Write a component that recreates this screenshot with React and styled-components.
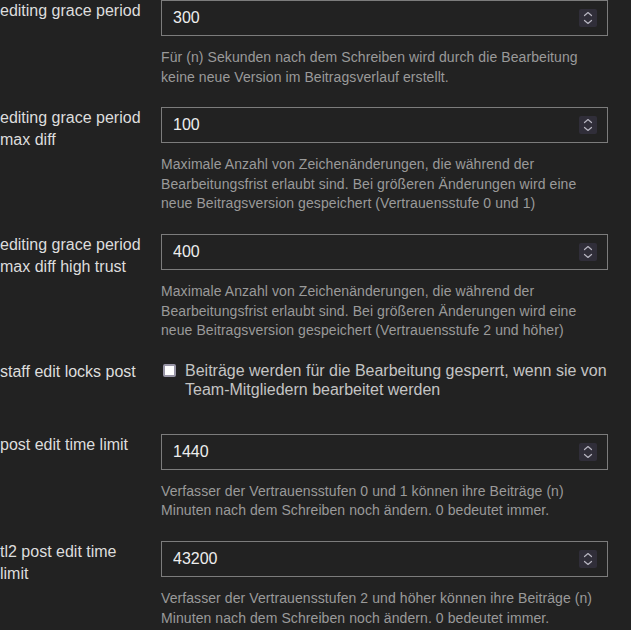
import React from "react"
import styled, { createGlobalStyle } from "styled-components"

const settings = [
    {
        label: "editing grace period",
        value: "300",
        description: "Für (n) Sekunden nach dem Schreiben wird durch die Bearbeitung keine neue Version im Beitragsverlauf erstellt."
    },
    {
        label: "editing grace period max diff",
        value: "100",
        description: "Maximale Anzahl von Zeichenänderungen, die während der Bearbeitungsfrist erlaubt sind. Bei größeren Änderungen wird eine neue Beitragsversion gespeichert (Vertrauensstufe 0 und 1)"
    },
    {
        label: "editing grace period max diff high trust",
        value: "400",
        description: "Maximale Anzahl von Zeichenänderungen, die während der Bearbeitungsfrist erlaubt sind. Bei größeren Änderungen wird eine neue Beitragsversion gespeichert (Vertrauensstufe 2 und höher)"
    },
    {
        label: "staff edit locks post",
        checkbox: "Beiträge werden für die Bearbeitung gesperrt, wenn sie von Team-Mitgliedern bearbeitet werden"
    },
    {
        label: "post edit time limit",
        value: "1440",
        description: "Verfasser der Vertrauensstufen 0 und 1 können ihre Beiträge (n) Minuten nach dem Schreiben noch ändern. 0 bedeutet immer."
    },
    {
        label: "tl2 post edit time limit",
        value: "43200",
        description: "Verfasser der Vertrauensstufen 2 und höher können ihre Beiträge (n) Minuten nach dem Schreiben noch ändern. 0 bedeutet immer."
    }
]

const GlobalStyle = createGlobalStyle`
body{
    margin:0;
    background:#222222;
    font-family:"Liberation Sans", Arial, sans-serif;
}
`

const Page = styled.div`
display:flex;
flex-direction:column;
`

const SettingRow = styled.div`
display:grid;
grid-template-columns:145px 447px;
column-gap:16px;
align-items:start;
margin-bottom:${props => props.$checkbox ? "35px" : "20px"};
`

const Label = styled.div`
font-size:16px;
line-height:22px;
color:#dddddd;
`

const Control = styled.div`
display:flex;
flex-direction:column;
`

const Field = styled.div`
position:relative;
`

const NumberInput = styled.input`
box-sizing:border-box;
width:100%;
height:36px;
margin:0;
padding:0 11px;
background:#222222;
border:1px solid #7c7c7c;
border-radius:0;
color:#eeeeee;
font-family:inherit;
font-size:16px;
outline:none;
`

const Spinner = styled.div`
position:absolute;
right:11px;
top:9px;
width:18px;
height:18px;
background:#302e39;
border-radius:2px;
display:flex;
align-items:center;
justify-content:center;
`

const Description = styled.div`
margin-top:12px;
max-width:438px;
font-size:14px;
line-height:1.4;
letter-spacing:0.08px;
color:#9a9a9a;
`

const CheckRow = styled.label`
display:flex;
align-items:flex-start;
gap:9px;
font-size:16px;
line-height:19px;
color:#c4c4c4;
`

const CheckBox = styled.span`
flex:none;
box-sizing:border-box;
width:13px;
height:13px;
margin:3px 0 0 2px;
background:#ffffff;
border:2px solid #9895a6;
border-radius:2px;
`

function SpinIcon(){
    return (
        <svg width="10" height="14" viewBox="0 0 10 14" fill="none" stroke="#b7b5c0" strokeWidth="1.2" strokeLinecap="round" strokeLinejoin="round">
            <path d="M1.5 4.5 L5 1.5 L8.5 4.5" />
            <path d="M1.5 9.5 L5 12.5 L8.5 9.5" />
        </svg>
    )
}

export default function App(){
    return(
        <Page>
            <GlobalStyle />
            {settings.map(s => (
                <SettingRow key={s.label} $checkbox={!!s.checkbox}>
                    <Label>{s.label}</Label>
                    <Control>
                        {s.checkbox ? (
                            <CheckRow>
                                <CheckBox />
                                <span>{s.checkbox}</span>
                            </CheckRow>
                        ) : (
                            <>
                                <Field>
                                    <NumberInput type="text" value={s.value} readOnly />
                                    <Spinner><SpinIcon /></Spinner>
                                </Field>
                                <Description>{s.description}</Description>
                            </>
                        )}
                    </Control>
                </SettingRow>
            ))}
        </Page>
    )
}
